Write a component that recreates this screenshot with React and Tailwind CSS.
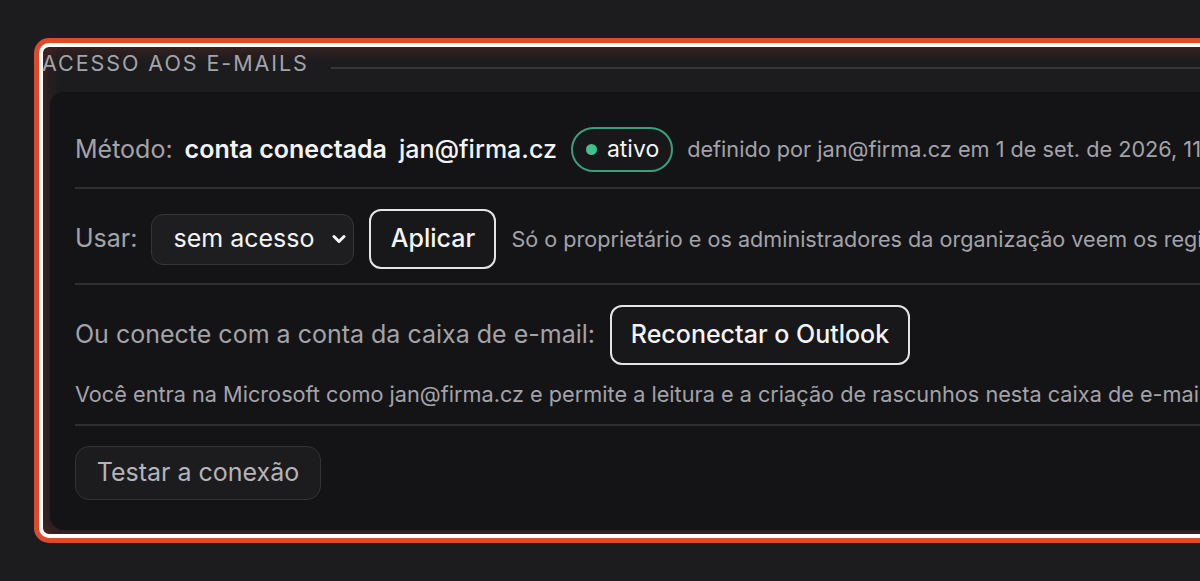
import React from "react";

export default function App() {
  return (
    <div
      className="w-[1200px] h-[581px] overflow-hidden bg-[#1c1c1f] relative"
      style={{ fontFamily: "Inter, 'Noto Sans', sans-serif" }}
    >
      <div className="pt-[38px] pl-[34px]">
        <div className="w-[1300px] rounded-[15px] bg-[#e0492b] p-[5px]">
          <div className="rounded-[10px] border-[4px] border-white bg-[#1c1c1f] shadow-[inset_0_0_18px_rgba(224,73,43,0.3)] pb-[4px]">
            <div className="flex items-start h-[41px] pt-[3px]">
              <span className="text-[21.5px] tracking-[0.09em] text-[#a3a3aa] leading-[26px] -ml-[1px]">
                ACESSO AOS E-MAILS
              </span>
              <div className="ml-[22px] mt-[17px] flex-1 h-[1.5px] bg-[#36363a]" />
            </div>
            <div className="ml-[7px] mt-[4px] rounded-tl-[14px] rounded-bl-[14px] bg-[#141416] pl-[25px] pt-[35px] pb-[30px]">
              {/* Row 1 */}
              <div className="flex items-center h-[45px] whitespace-nowrap">
                <span className="text-[25px] text-[#a3a3aa]">Método:</span>
                <span className="ml-[12px] text-[25px] font-semibold text-[#f4f4f5]">conta conectada</span>
                <span className="ml-[12px] text-[25px] font-medium text-[#f4f4f5]">jan@firma.cz</span>
                <span className="ml-[14px] flex items-center h-[45px] pl-[13px] pr-[12px] rounded-full border-2 border-[#3a9f78] bg-[#18181b]">
                  <span className="w-[11px] h-[11px] rounded-full bg-[#44c08c]" />
                  <span className="ml-[10px] text-[23px] text-[#f4f4f5]">ativo</span>
                </span>
                <span className="ml-[14px] text-[21.7px] text-[#a3a3aa]">
                  definido por jan@firma.cz em 1 de set. de 2026, 11:42
                </span>
              </div>
              <div className="mt-[15px] h-[2px] bg-[#2f2f33]" />
              {/* Row 2 */}
              <div className="mt-[20px] flex items-center h-[60px] whitespace-nowrap">
                <span className="text-[25px] text-[#a3a3aa]">Usar:</span>
                <div className="ml-[14px] flex items-center w-[203px] h-[51px] rounded-[12px] border-[1.5px] border-[#36363a] bg-[#1e1e21] pl-[21px] pr-[7px]">
                  <span className="text-[25px] text-[#f4f4f5]">sem acesso</span>
                  <svg className="ml-auto" width="14" height="10" viewBox="0 0 14 10">
                    <path d="M2 2.5 L7 7.5 L12 2.5" fill="none" stroke="#f4f4f5" strokeWidth="3" strokeLinecap="round" strokeLinejoin="round" />
                  </svg>
                </div>
                <button className="ml-[15px] h-[60px] w-[127px] rounded-[12px] border-2 border-[#e4e4e7] bg-[#18181b] text-[25px] font-medium text-[#f4f4f5]">
                  Aplicar
                </button>
                <span className="ml-[15px] text-[21.6px] text-[#a3a3aa]">
                  Só o proprietário e os administradores da organização veem os registros.
                </span>
              </div>
              <div className="mt-[14px] h-[2px] bg-[#2f2f33]" />
              {/* Row 3 */}
              <div className="mt-[20px] flex items-center h-[60px] whitespace-nowrap">
                <span className="text-[25px] text-[#a3a3aa]">Ou conecte com a conta da caixa de e-mail:</span>
                <button className="ml-[15px] h-[60px] w-[300px] rounded-[12px] border-2 border-[#e4e4e7] bg-[#18181b] text-[25px] font-medium text-[#f4f4f5]">
                  Reconectar o Outlook
                </button>
              </div>
              <div className="mt-[15px] h-[28px] flex items-center whitespace-nowrap text-[21.7px] text-[#a3a3aa]">
                Você entra na Microsoft como jan@firma.cz e permite a leitura e a criação de rascunhos nesta caixa de e-mail.
              </div>
              <div className="mt-[16px] h-[2px] bg-[#2f2f33]" />
              {/* Row 5 */}
              <div className="mt-[20px] flex">
                <button className="h-[54px] w-[246px] rounded-[14px] border-[1.5px] border-[#333337] bg-[#1c1c1f] text-[25px] text-[#b4b4b9]">
                  Testar a conexão
                </button>
              </div>
            </div>
          </div>
        </div>
      </div>
    </div>
  );
}
